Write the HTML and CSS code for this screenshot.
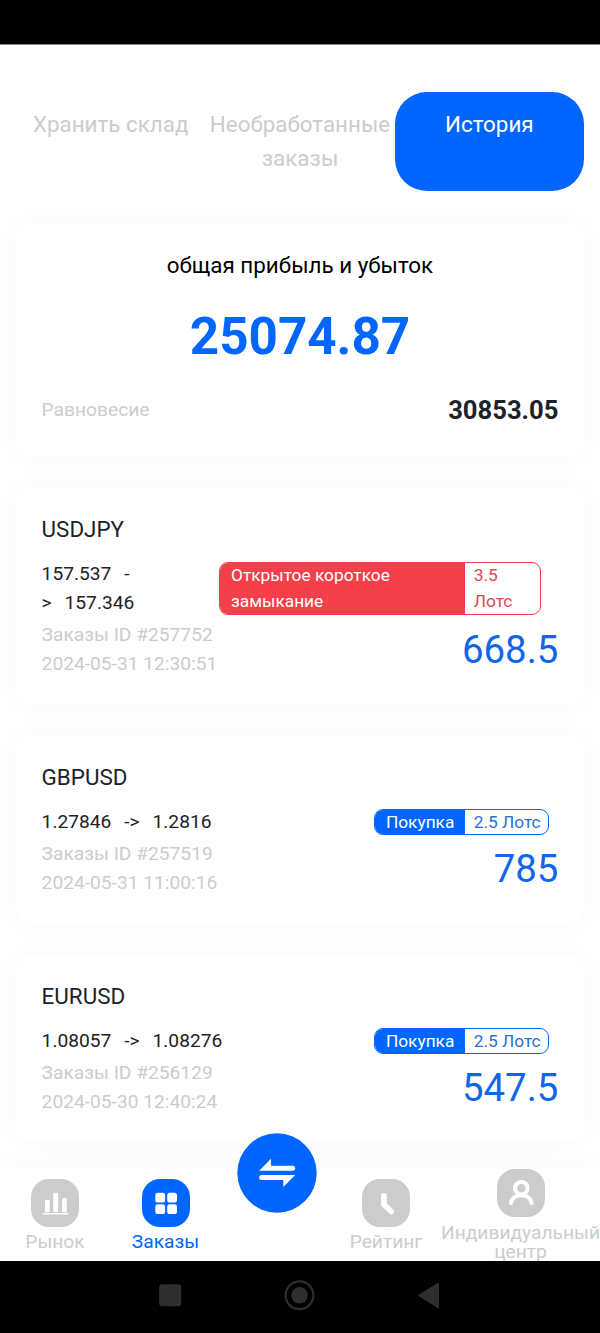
FILE: index.html
```html
<!DOCTYPE html>
<html lang="ru">

<head>
    <meta charset="UTF-8">
    <meta name="viewport" content="width=device-width, initial-scale=1.0">
    <title>История</title>
    <link rel="stylesheet" href="styles.css">
</head>

<body>
    <div class="status-bar"></div>

    <main class="content">
        <div class="tabs">
            <div class="tab">Хранить склад</div>
            <div class="tab">Необработанные заказы</div>
            <div class="tab active">История</div>
        </div>

        <section class="card summary">
            <div class="summary-title">общая прибыль и убыток</div>
            <div class="summary-total">25074.87</div>
            <div class="summary-row">
                <span class="summary-label">Равновесие</span>
                <span class="summary-balance">30853.05</span>
            </div>
        </section>

        <section class="card order">
            <div class="symbol">USDJPY</div>
            <div class="order-row">
                <div class="prices">157.537&nbsp; -<br>&gt;&nbsp; 157.346</div>
                <div class="badge sell">
                    <span class="side">Открытое короткое замыкание</span>
                    <span class="lots">3.5 Лотс</span>
                </div>
            </div>
            <div class="order-info">
                <div class="meta">Заказы ID #257752<br>2024-05-31 12:30:51</div>
                <div class="profit">668.5</div>
            </div>
        </section>

        <section class="card order">
            <div class="symbol">GBPUSD</div>
            <div class="order-row">
                <div class="prices">1.27846&nbsp; -&gt;&nbsp; 1.2816</div>
                <div class="badge buy">
                    <span class="side">Покупка</span>
                    <span class="lots">2.5 Лотс</span>
                </div>
            </div>
            <div class="order-info">
                <div class="meta">Заказы ID #257519<br>2024-05-31 11:00:16</div>
                <div class="profit">785</div>
            </div>
        </section>

        <section class="card order">
            <div class="symbol">EURUSD</div>
            <div class="order-row">
                <div class="prices">1.08057&nbsp; -&gt;&nbsp; 1.08276</div>
                <div class="badge buy">
                    <span class="side">Покупка</span>
                    <span class="lots">2.5 Лотс</span>
                </div>
            </div>
            <div class="order-info">
                <div class="meta">Заказы ID #256129<br>2024-05-30 12:40:24</div>
                <div class="profit">547.5</div>
            </div>
        </section>
    </main>

    <nav class="bottom-nav">
        <a class="nav-item">
            <svg class="nav-icon" viewBox="0 0 48 48">
                <rect width="48" height="48" rx="18" />
                <g fill="#fff">
                    <rect x="14" y="21" width="4.8" height="12.2" rx="1.4" />
                    <rect x="22.2" y="13.8" width="5" height="19.4" rx="1.4" />
                    <rect x="31" y="19" width="4.8" height="14.2" rx="1.4" />
                    <rect x="11.5" y="34" width="26" height="1.4" rx="0.7" />
                </g>
            </svg>
            <span>Рынок</span>
        </a>
        <a class="nav-item active">
            <svg class="nav-icon" viewBox="0 0 48 48">
                <rect width="48" height="48" rx="18" />
                <g fill="#fff">
                    <rect x="13.3" y="13.7" width="9.8" height="9.8" rx="2.6" />
                    <rect x="25.2" y="13.7" width="9.8" height="9.8" rx="2.6" />
                    <rect x="13.3" y="25.2" width="9.8" height="9.8" rx="2.6" />
                    <rect x="25.2" y="25.2" width="9.8" height="9.8" rx="2.6" />
                </g>
            </svg>
            <span>Заказы</span>
        </a>
        <a class="nav-item trade">
            <svg class="trade-icon" viewBox="0 0 80 80">
                <circle cx="40" cy="40" r="39.7" />
                <path fill="#fff" d="M22.2 37.7 L34 25.8 V32.7 H55.7 A2.5 2.5 0 0 1 55.7 37.7 Z" />
                <path fill="#fff" d="M58.2 42 L46.3 54 V47 H24.6 A2.5 2.5 0 0 1 24.6 42 Z" />
            </svg>
        </a>
        <a class="nav-item">
            <svg class="nav-icon" viewBox="0 0 48 48">
                <rect width="48" height="48" rx="18" />
                <path d="M19 15.8 A1.5 1.5 0 0 1 20.5 14.3 H23.3 A1.5 1.5 0 0 1 24.8 15.8 V24.3 L31.8 31.5 A2 2 0 0 1 31.8 34 L30.6 35 A2 2 0 0 1 28 35 L20 27.5 Q19 26.5 19 25 Z" fill="#fff" />
            </svg>
            <span>Рейтинг</span>
        </a>
        <a class="nav-item">
            <svg class="nav-icon" viewBox="0 0 48 48">
                <rect width="48" height="48" rx="18" />
                <g fill="none" stroke="#fff" stroke-width="4" stroke-linecap="round">
                    <circle cx="24.3" cy="19.2" r="6.3" />
                    <path d="M14 34 C15.5 23.5 33 23.5 34.6 34" />
                </g>
            </svg>
            <span>Индивидуальный центр</span>
        </a>
    </nav>

    <div class="system-bar">
        <svg width="600" height="72" viewBox="0 0 600 72" fill="#2e2e2e">
            <rect x="159.2" y="23.3" width="22" height="22" rx="3" />
            <circle cx="299.5" cy="34.3" r="8.3" />
            <circle cx="299.5" cy="34.3" r="13.9" fill="none" stroke="#2e2e2e" stroke-width="2.2" />
            <path d="M419.5 34.3 L438 22.8 V46.2 Z" stroke="#2e2e2e" stroke-width="2" stroke-linejoin="round" />
        </svg>
    </div>
</body>

</html>
```
FILE: styles.css
```css
* {
    box-sizing: border-box;
}

body {
    display: flex;
    flex-direction: column;
    height: 1333px;
    margin: 0;
    overflow: hidden;
    background-color: #fff;
    color: #1d2129;
    font-family: Roboto, sans-serif;
    font-size: 19.2px;
    line-height: 1.5;
}

.status-bar {
    flex: none;
    height: 44.8px;
    background-color: #000;
    border-bottom: 1px solid #888;
}

.content {
    flex: 1;
    min-height: 0;
    padding: 47.4px 16px 0;
    overflow: hidden;
}

.tabs {
    display: grid;
    grid-template-columns: repeat(3, 1fr);
    margin-bottom: 32.4px;
    color: #ccc;
    font-size: 22.4px;
    text-align: center;
}

.tab {
    min-width: 0;
    padding: 16px 0;
    border-radius: 32px;
}

.tab.active {
    background-color: #06f;
    color: #fff;
}

.card {
    margin-bottom: 32px;
    padding: 25px 25.6px 25.6px;
    border-radius: 16px;
    background-color: #fff;
    box-shadow: 0 0 32px rgba(0, 0, 0, 0.03);
}

.card.summary {
    padding-bottom: 26.4px;
}

.summary-title {
    color: #000;
    font-size: 22.4px;
    text-align: center;
}

.summary-total {
    margin: 16.6px 0 15.6px;
    color: #06f;
    font-size: 51.2px;
    font-weight: bold;
    text-align: center;
}

.summary-row {
    display: flex;
    align-items: center;
    justify-content: space-between;
}

.summary-label {
    color: #ccc;
}

.summary-balance {
    font-size: 25.6px;
    font-weight: bold;
}

.symbol {
    margin-bottom: 13.2px;
    font-size: 22.4px;
}

.order-row {
    display: flex;
    align-items: center;
    justify-content: space-between;
}

.prices {
    word-spacing: 1.7px;
}

.badge {
    display: flex;
    margin: -1px 9px -1px 0;
    border: 1.6px solid #06f;
    border-radius: 9px;
    overflow: hidden;
    color: #2a6fd6;
    font-size: 17.3px;
    line-height: 25.6px;
}

.badge.buy {
    line-height: 24.4px;
}

.badge .side {
    padding: 0 11px 0 10.6px;
    background-color: #06f;
    color: #fff;
}

.badge .lots {
    padding: 0 7.8px 0 8.4px;
}

.badge.sell {
    width: 322px;
    margin-right: 17px;
    border-color: #f53f4b;
    color: #d84a58;
}

.badge.sell .side {
    width: 245px;
    background-color: #f53f4b;
}

.badge.sell .lots {
    flex: 1;
}

.order-info {
    display: flex;
    align-items: center;
    justify-content: space-between;
    margin-top: 3.2px;
}

.meta {
    color: #ccc;
}

.profit {
    color: #1066e8;
    font-size: 38.4px;
}

.bottom-nav {
    display: grid;
    grid-template-columns: 110px 111px 110px 110px 159px;
    flex: none;
    z-index: 1;
    height: 92px;
    background-color: #fff;
    box-shadow: 0 0 32px rgba(0, 0, 0, 0.03);
    color: #ccc;
    line-height: 19.2px;
    text-align: center;
}

.nav-item {
    display: flex;
    flex-direction: column;
    align-items: center;
    justify-content: center;
    gap: 5.6px;
}

.nav-item.active {
    color: #06f;
}

.nav-icon {
    flex: none;
    width: 48px;
    height: 48px;
    fill: currentColor;
}

.trade {
    justify-content: flex-start;
}

.trade-icon {
    width: 80px;
    height: 80px;
    margin: -36px 0 0 2px;
    fill: #06f;
}

.system-bar {
    flex: none;
    z-index: 1;
    height: 72px;
    background-color: #000;
}
```
